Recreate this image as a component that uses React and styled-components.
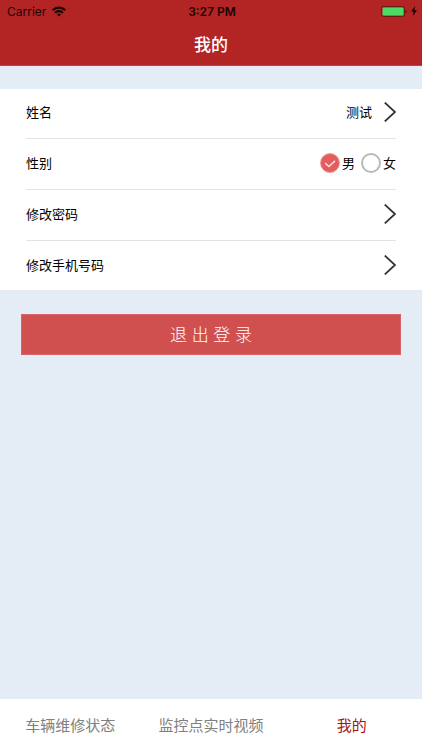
import React, {Component} from "react"
import styled, {createGlobalStyle} from "styled-components";

const GlobalStyle = createGlobalStyle`
    * {
        box-sizing: border-box;
    }
    body {
        margin: 0;
        background: #e4ecf5;
        font-family: "Noto Sans CJK SC", sans-serif;
    }
    button, input {
        font-family: inherit;
        margin: 0;
    }
`;

const Screen = styled.div`
    display: flex;
    flex-direction: column;
    min-height: 100vh;
`;

const Header = styled.header`
    background: #b32424;
    border-bottom: 1px solid #b94444;
`;

const StatusBar = styled.div`
    display: grid;
    grid-template-columns: 1fr auto 1fr;
    align-items: center;
    height: 22px;
    padding: 0 5px 0 7px;
    color: #1c0404;
    font-family: Inter, sans-serif;
    font-size: 12px;
`;

const StatusGroup = styled.div`
    display: flex;
    align-items: center;
    justify-content: ${props => props.$end ? "flex-end" : "flex-start"};
    gap: ${props => props.$end ? "4px" : "6px"};
`;

const Clock = styled.span`
    font-weight: 600;
`;

const Title = styled.h1`
    margin: 0;
    height: 43px;
    line-height: 43px;
    text-align: center;
    color: white;
    font-size: 17px;
    font-weight: 500;
`;

const Content = styled.main`
    flex: 1;
    padding-top: 22px;
`;

const Panel = styled.div`
    padding: 0 26px;
    background: white;
    box-shadow: inset 0 1px #e4ecf5, inset 0 -1px #e9eaed;
`;

const Row = styled.div`
    display: flex;
    align-items: center;
    justify-content: space-between;
    height: 51px;
    padding: 0 0 2px;
    border: 0 solid #e3e3e3;
    border-bottom-width: 1px;
    font-size: 13px;
    line-height: 18px;
    color: black;

    &:last-child {
        height: 50px;
        border-bottom-width: 0;
    }
`;

const RowButton = styled(Row).attrs({as: "button", type: "button"})`
    width: 100%;
    background: none;
    text-align: left;
    cursor: pointer;
`;

const RowValue = styled.span`
    display: flex;
    align-items: center;
    gap: 12px;
`;

const GenderGroup = styled.div`
    display: flex;
    gap: 6px;
`;

const GenderLabel = styled.label`
    display: flex;
    align-items: center;
    gap: 2px;
    cursor: pointer;
`;

const RadioBox = styled.span`
    display: grid;
    width: 20px;
    height: 20px;

    > * {
        grid-area: 1 / 1;
    }
    svg {
        visibility: hidden;
        pointer-events: none;
    }
    input:checked + svg {
        visibility: visible;
    }
`;

const Radio = styled.input`
    appearance: none;
    width: 20px;
    height: 20px;
    border: 2px solid #b9b9b9;
    border-radius: 50%;
    background: white;

    &:checked {
        border: 1px solid #efa0a0;
        background: #e45c5c;
    }
`;

const LogoutButton = styled.button`
    display: block;
    width: calc(100% - 42px);
    height: 41px;
    margin: 23px auto 0;
    padding: 0 0 2px;
    border: 1px solid #d66467;
    background: #d05050;
    color: white;
    font-family: "Liberation Sans", "Noto Sans CJK SC", sans-serif;
    font-size: 17px;
    font-weight: 300;
    cursor: pointer;
`;

const TabBar = styled.nav`
    display: flex;
    height: 51px;
    background: white;
`;

const Tab = styled.a`
    flex: 1;
    line-height: 51px;
    text-align: center;
    text-decoration: none;
    white-space: nowrap;
    font-size: 15px;
    color: ${props => props.$active ? "#a81414" : "#808080"};
`;

const WifiIcon = () => (
    <svg width="14" height="11" viewBox="0 0 14 11" fill="none" stroke="#1c0404" strokeWidth="2.2" aria-hidden="true">
        <path d="M0.8 4.1a8.8 8.8 0 0 1 12.4 0" />
        <path d="M3.1 6.8a5.5 5.5 0 0 1 7.8 0" />
        <path d="M7 10.6L4.9 8.5a3 3 0 0 1 4.2 0z" fill="#1c0404" stroke="none" />
    </svg>
)

const BatteryIcon = () => (
    <svg width="26" height="11" viewBox="0 0 26 11" aria-hidden="true">
        <rect x="0.5" y="0.5" width="23" height="10" rx="2" fill="none" stroke="#6b1c12" />
        <rect x="1.5" y="1.5" width="21" height="8" rx="1" fill="#4cd964" />
        <path d="M24.7 3.8v3.4a1.8 1.8 0 0 0 0-3.4z" fill="#5c1010" />
    </svg>
)

const BoltIcon = () => (
    <svg width="6" height="10" viewBox="0 0 6 10" aria-hidden="true">
        <path d="M4.2 0L0 5.6h2.6L1.8 10L6 4.2H3.4z" fill="#1c0404" />
    </svg>
)

const ArrowIcon = () => (
    <svg width="12" height="20" viewBox="0 0 12 20" fill="none" stroke="#333333" strokeWidth="1.8" aria-hidden="true">
        <path d="M0.8 0.6L11 10L0.8 19.4" />
    </svg>
)

const CheckIcon = () => (
    <svg width="20" height="20" viewBox="0 0 20 20" fill="none" stroke="#fbdcdc" strokeWidth="1.6" aria-hidden="true">
        <path d="M5.2 10.2L8.9 13.5L15 7.8" />
    </svg>
)

const genders = [
    {id: "male", title: "男"},
    {id: "female", title: "女"}
]

const tabs = [
    {id: "repair", title: "车辆维修状态"},
    {id: "video", title: "监控点实时视频"},
    {id: "mine", title: "我的"}
]

class App extends Component {
    constructor(props) {
        super(props)

        this.state = {
            gender: "male",
            tab: "mine"
        }
    }

    selectTab(e, id) {
        e.preventDefault()
        this.setState({tab: id})
    }

    render() {
        return (
            <Screen>
                <GlobalStyle />
                <Header>
                    <StatusBar>
                        <StatusGroup>
                            <span>Carrier</span>
                            <WifiIcon />
                        </StatusGroup>
                        <Clock>3:27 PM</Clock>
                        <StatusGroup $end>
                            <BatteryIcon />
                            <BoltIcon />
                        </StatusGroup>
                    </StatusBar>
                    <Title>我的</Title>
                </Header>

                <Content>
                    <Panel>
                        <RowButton>
                            <span>姓名</span>
                            <RowValue>
                                <span>测试</span>
                                <ArrowIcon />
                            </RowValue>
                        </RowButton>
                        <Row role="radiogroup" aria-labelledby="gender-title">
                            <span id="gender-title">性别</span>
                            <GenderGroup>
                                {
                                    genders.map(gender => (
                                        <GenderLabel key={gender.id}>
                                            <RadioBox>
                                                <Radio
                                                    type="radio"
                                                    name="gender"
                                                    value={gender.id}
                                                    checked={this.state.gender === gender.id}
                                                    onChange={() => this.setState({gender: gender.id})}
                                                />
                                                <CheckIcon />
                                            </RadioBox>
                                            {gender.title}
                                        </GenderLabel>
                                    ))
                                }
                            </GenderGroup>
                        </Row>
                        <RowButton>
                            <span>修改密码</span>
                            <ArrowIcon />
                        </RowButton>
                        <RowButton>
                            <span>修改手机号码</span>
                            <ArrowIcon />
                        </RowButton>
                    </Panel>
                    <LogoutButton type="button">退 出 登 录</LogoutButton>
                </Content>

                <TabBar>
                    {
                        tabs.map(tab => (
                            <Tab key={tab.id} href={`#${tab.id}`} $active={this.state.tab === tab.id} onClick={(e) => this.selectTab(e, tab.id)}>
                                {tab.title}
                            </Tab>
                        ))
                    }
                </TabBar>
            </Screen>
        )
    }
}

export default App;
